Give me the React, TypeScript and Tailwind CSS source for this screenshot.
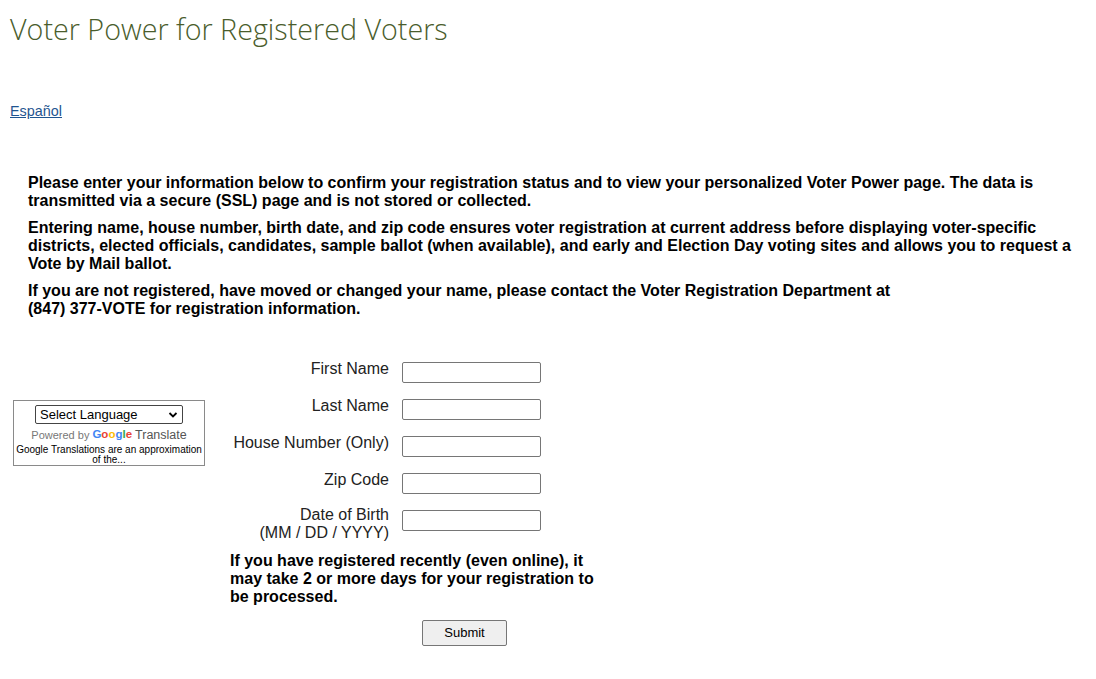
export default function App() {
  const labelCls = "w-[159px] shrink-0 text-right text-[16px] leading-[18px] text-[#222]";
  const inputCls = "ml-[13px] mt-[2px] h-[21px] w-[139px] rounded-[2px] border border-[#767676] bg-white";
  return (
    <div className="min-h-[679px] w-[1096px] bg-white text-black font-['Liberation_Sans',Arial,sans-serif]">
      <h1 className="pl-[10px] pt-[10px] text-[28.7px] leading-[38px] font-light text-[#4a5d2c] font-['Open_Sans',sans-serif]">
        Voter Power for Registered Voters
      </h1>
      <div className="pl-[10px] mt-[51px]">
        <a href="#" className="text-[14.4px] leading-[16px] underline text-[#1f5590]">Español</a>
      </div>
      <div className="pl-[28px] pr-[20px] mt-[51px] text-[16px] font-bold leading-[18px]">
        <p className="mb-[9px]">
          Please enter your information below to confirm your registration status and to view your personalized Voter Power page. The data is transmitted via a secure (SSL) page and is not stored or collected.
        </p>
        <p className="mb-[9px]">
          Entering name, house number, birth date, and zip code ensures voter registration at current address before displaying voter-specific districts, elected officials, candidates, sample ballot (when available), and early and Election Day voting sites and allows you to request a Vote by Mail ballot.
        </p>
        <p>
          If you are not registered, have moved or changed your name, please contact the Voter Registration Department at
          <br />
          (847) 377-VOTE for registration information.
        </p>
      </div>
      <div className="flex mt-[42px]">
        <div className="ml-[13px] mt-[40px] h-[66px] w-[192px] border border-[#8a8a8a] flex flex-col items-center">
          <div className="mt-[4px] h-[19px] w-[148px] rounded-[2px] border border-[#444] flex items-center justify-between pl-[4px] pr-[4px] text-[13px] leading-[16px] text-black">
            <span>Select Language</span>
            <svg width="10" height="8" viewBox="0 0 10 8">
              <path d="M1.5 2 L5 5.5 L8.5 2" fill="none" stroke="#000" strokeWidth="1.8" />
            </svg>
          </div>
          <div className="mt-[3px] h-[16px] flex items-center text-[11px] text-[#777] whitespace-nowrap">
            <span>Powered by</span>
            <span className="ml-[3px] font-bold text-[11.5px]">
              <span className="text-[#4285F4]">G</span>
              <span className="text-[#EA4335]">o</span>
              <span className="text-[#FBBC05]">o</span>
              <span className="text-[#4285F4]">g</span>
              <span className="text-[#34A853]">l</span>
              <span className="text-[#EA4335]">e</span>
            </span>
            <span className="ml-[3px] text-[12.5px] text-[#555]">Translate</span>
          </div>
          <div className="mt-[2px] text-[10px] leading-[10px] text-black text-center">
            Google Translations are an approximation of the...
          </div>
        </div>
        <div className="ml-[25px] flex flex-col">
          <div className="flex h-[37px]">
            <div className={labelCls}>First Name</div>
            <div className={inputCls} />
          </div>
          <div className="flex h-[37px]">
            <div className={labelCls}>Last Name</div>
            <div className={inputCls} />
          </div>
          <div className="flex h-[37px]">
            <div className={labelCls}>House Number (Only)</div>
            <div className={inputCls} />
          </div>
          <div className="flex h-[37px]">
            <div className={labelCls}>Zip Code</div>
            <div className={inputCls} />
          </div>
          <div className="flex h-[44px]">
            <div className={labelCls + " -mt-[2px]"}>
              Date of Birth
              <br />
              (MM / DD / YYYY)
            </div>
            <div className={inputCls} />
          </div>
          <p className="w-[372px] text-[16px] font-bold leading-[18px]">
            If you have registered recently (even online), it may take 2 or more days for your registration to be processed.
          </p>
          <div className="mt-[14px] ml-[192px]">
            <button className="h-[26px] w-[85px] rounded-[2px] border border-[#767676] bg-[#efefef] text-[13px] text-black">
              Submit
            </button>
          </div>
        </div>
      </div>
    </div>
  );
}
